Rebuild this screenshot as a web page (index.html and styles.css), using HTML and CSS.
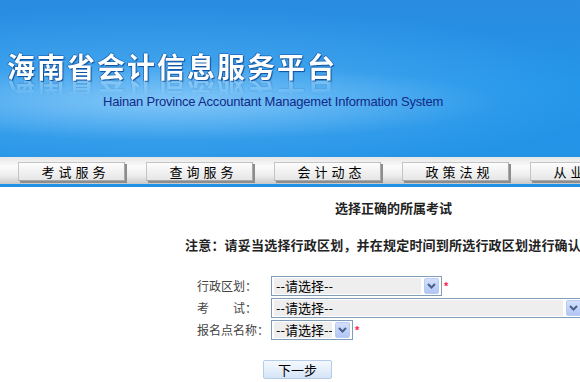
FILE: index.html
```html
<!DOCTYPE html>
<html lang="zh-CN">
<head>
<meta charset="utf-8">
<title>海南省会计信息服务平台</title>
<link rel="stylesheet" href="styles.css">
</head>
<body>
<div class="page">
  <header class="banner">
    <div class="banner-title">海南省会计信息服务平台</div>
    <div class="banner-en">Hainan Province Accountant Managemet Information System</div>
  </header>
  <nav class="nav">
    <a class="nav-btn">考试服务</a>
    <a class="nav-btn">查询服务</a>
    <a class="nav-btn">会计动态</a>
    <a class="nav-btn">政策法规</a>
    <a class="nav-btn">从业人员</a>
  </nav>
  <main class="content">
    <h1 class="title">选择正确的所属考试</h1>
    <p class="notice">注意：请妥当选择行政区划，并在规定时间到所选行政区划进行确认考试。</p>
    <div class="form">
      <div class="row">
        <span class="label">行政区划：</span>
        <span class="sel w1"><span class="txt">--请选择--</span><span class="arr"><svg width="9" height="6" viewBox="0 0 9 6"><path d="M1 1 L4.5 4.5 L8 1" fill="none" stroke="#4a5f87" stroke-width="2"/></svg></span></span>
        <span class="req">*</span>
      </div>
      <div class="row">
        <span class="label"><span class="sp">考</span>试：</span>
        <span class="sel w2"><span class="txt">--请选择--</span><span class="arr"><svg width="9" height="6" viewBox="0 0 9 6"><path d="M1 1 L4.5 4.5 L8 1" fill="none" stroke="#4a5f87" stroke-width="2"/></svg></span></span>
      </div>
      <div class="row">
        <span class="label">报名点名称：</span>
        <span class="sel w3"><span class="txt">--请选择--</span><span class="arr"><svg width="9" height="6" viewBox="0 0 9 6"><path d="M1 1 L4.5 4.5 L8 1" fill="none" stroke="#4a5f87" stroke-width="2"/></svg></span></span>
        <span class="req">*</span>
      </div>
      <div class="btn-row">
        <button class="next">下一步</button>
      </div>
    </div>
  </main>
</div>
</body>
</html>
```
FILE: styles.css
```css
html, body {
  margin: 0;
  padding: 0;
  background: #fff;
  overflow: hidden;
}
body {
  font-family: "Noto Sans CJK SC", "Liberation Sans", sans-serif;
  color: #000;
}
.page {
  width: 580px;
  overflow: hidden;
}
.banner {
  width: 800px;
  height: 157px;
  box-sizing: border-box;
  padding: 47px 0 0 7px;
  background:
    radial-gradient(ellipse 330px 38px at 170px 102px, rgba(175, 222, 255, 0.55), rgba(175, 222, 255, 0) 100%),
    radial-gradient(ellipse 460px 85px at 160px 92px, rgba(105, 185, 245, 0.6), rgba(105, 185, 245, 0) 100%),
    linear-gradient(#2a8ce0, #2195e9 55%, #2393e6);
}
.banner-title {
  font-size: 28px;
  line-height: 38px;
  height: 38px;
  font-weight: bold;
  letter-spacing: 2px;
  color: #fff;
  text-shadow: 1px 1px 1px #0b4f9c, -1px 0 0 rgba(10, 70, 150, 0.55), 0 -1px 0 rgba(10, 70, 150, 0.45);
  -webkit-box-reflect: below -10px linear-gradient(transparent 45%, rgba(255, 255, 255, 0.35));
}
.banner-en {
  margin: 9px 0 0 96px;
  font-family: "Liberation Sans", Arial, sans-serif;
  font-size: 13px;
  letter-spacing: -0.2px;
  line-height: 16px;
  color: #112a86;
}
.nav {
  width: 800px;
  height: 30px;
  box-sizing: border-box;
  padding: 5px 0 0 18px;
  display: flex;
  gap: 21px;
  background: linear-gradient(#e6e6e6 0, #fbfbfb 35%, #ececec 70%, #c8c8c8 100%);
  border-bottom: 3px solid #1f92e8;
}
.nav-btn {
  width: 107px;
  height: 19px;
  box-sizing: border-box;
  border: 1px solid #a8a8a8;
  border-top-color: #c4c4c4;
  border-left-color: #c4c4c4;
  background: linear-gradient(#fdfdfd, #e6e6e6);
  box-shadow: 2px 2px 0 #8d8d8d;
  font-size: 13px;
  line-height: 17px;
  letter-spacing: 4px;
  padding-left: 8px;
  text-align: center;
  color: #000;
  white-space: nowrap;
}
.content {
  width: 800px;
  padding-top: 12px;
}
.title {
  margin: 0;
  padding-left: 335px;
  font-size: 13px;
  line-height: 17px;
  font-weight: bold;
  color: #222;
}
.notice {
  margin: 20px 0 0;
  padding-left: 185px;
  font-size: 13px;
  line-height: 17px;
  letter-spacing: 0.2px;
  font-weight: bold;
  color: #222;
  white-space: nowrap;
}
.form {
  margin-top: 23px;
  padding-left: 197px;
  display: flex;
  flex-direction: column;
  gap: 2px;
}
.row {
  display: flex;
  align-items: center;
  height: 20px;
}
.label {
  width: 74px;
  font-size: 12px;
  line-height: 16px;
  color: #444;
  white-space: nowrap;
}
.sp {
  margin-right: 24px;
}
.sel {
  display: flex;
  height: 20px;
  box-sizing: border-box;
  border: 1px solid #7f9db9;
  padding: 1px 2px 1px 2px;
  gap: 3px;
  background: #fff;
}
.w1 { width: 171px; }
.w2 { width: 313px; }
.w3 { width: 82px; }
.txt {
  flex: 1;
  background: #eeeeee;
  font-size: 13px;
  line-height: 16px;
  padding-left: 2px;
  white-space: nowrap;
  overflow: hidden;
}
.arr {
  width: 15px;
  height: 16px;
  box-sizing: border-box;
  border: 1px solid #b9cbf3;
  border-radius: 2px;
  background: linear-gradient(#d3e0fd, #b0c6f4);
  display: flex;
  align-items: center;
  justify-content: center;
}
.req {
  margin-left: 2px;
  color: #ff1a4a;
  font-size: 11px;
  line-height: 12px;
  font-family: "Liberation Sans", sans-serif;
  font-weight: bold;
}
.btn-row {
  margin-top: 14px;
  padding-left: 66px;
}
.next {
  width: 69px;
  height: 19px;
  box-sizing: border-box;
  border: 1px solid #b4cce8;
  border-radius: 2px;
  background: linear-gradient(#f6f9fd, #d4e4f7);
  font-family: "Noto Sans CJK SC", sans-serif;
  font-size: 13px;
  line-height: 15px;
  padding: 0;
  color: #000;
}
```
